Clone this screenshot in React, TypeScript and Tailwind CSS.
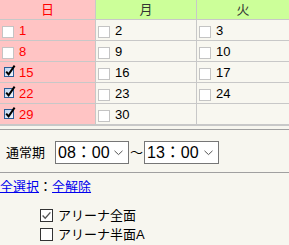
import React from "react";

const FONT = "font-['Liberation_Sans','Noto_Sans_CJK_JP',sans-serif]";

function OldBox({ checked }: { checked: boolean }) {
  if (!checked) {
    return (
      <span className="mt-[1px] inline-block h-[12px] w-[12px] shrink-0 border border-[#c4c4c4] bg-white" />
    );
  }
  return (
    <svg width="14" height="14" viewBox="0 0 14 14" className="ml-[3px] mr-[2px] mt-[1px] shrink-0">
      <defs>
        <linearGradient id="ob" x1="0" y1="0" x2="1" y2="1">
          <stop offset="0" stopColor="#b9d3ef" />
          <stop offset="1" stopColor="#f4f8fd" />
        </linearGradient>
      </defs>
      <rect x="1.5" y="3.5" width="9" height="9" fill="url(#ob)" stroke="#2a5d97" />
      <path d="M3.2 7.6 L5.6 10.4 L11.6 1.6" fill="none" stroke="#000" strokeWidth="2" />
    </svg>
  );
}

function Cell({
  n,
  checked,
  sunday,
}: {
  n?: number;
  checked?: boolean;
  sunday?: boolean;
}) {
  return (
    <div
      className={`flex h-[20px] items-start pt-[1px] ${sunday ? "bg-[#ffc4c4]" : "bg-[#f8f7f0]"}`}
    >
      {n !== undefined && (
        <>
          <span className={checked ? "" : "ml-[2px]"}>
            <OldBox checked={!!checked} />
          </span>
          <span
            className={`${checked ? "ml-0" : "ml-[5px]"} pt-[1px] text-[13px] leading-[17px] ${
              sunday ? "text-[#ff0000]" : "text-black"
            }`}
          >
            {n}
          </span>
        </>
      )}
    </div>
  );
}

function Chevron() {
  return (
    <svg width="9" height="6" viewBox="0 0 9 6" className="shrink-0">
      <path d="M0.5 0.8 L4.5 4.6 L8.5 0.8" fill="none" stroke="#555" strokeWidth="1" />
    </svg>
  );
}

function Sel({ v, w }: { v: string; w: string }) {
  return (
    <div
      className={`flex h-[23px] ${w} items-center justify-between border border-[#767676] bg-white pl-[2px] pr-[5px]`}
    >
      <span className="text-[16px] leading-[20px] text-black">{v}</span>
      <Chevron />
    </div>
  );
}

function ModernBox({ checked }: { checked: boolean }) {
  return (
    <svg width="13" height="13" viewBox="0 0 13 13" className="shrink-0">
      <rect x="0.5" y="0.5" width="12" height="12" fill="#fff" stroke="#333" />
      {checked && (
        <path d="M2.6 6.6 L5.2 9.2 L10.4 3.4" fill="none" stroke="#555" strokeWidth="1.4" />
      )}
    </svg>
  );
}

export default function App() {
  const rows: ({ n?: number; c?: boolean })[][] = [
    [{ n: 1 }, { n: 2 }, { n: 3 }],
    [{ n: 8 }, { n: 9 }, { n: 10 }],
    [{ n: 15, c: true }, { n: 16 }, { n: 17 }],
    [{ n: 22, c: true }, { n: 23 }, { n: 24 }],
    [{ n: 29, c: true }, { n: 30 }, {}],
  ];
  return (
    <div className={`h-[245px] w-[289px] overflow-hidden bg-[#f7f6ef] ${FONT}`}>
      <div className="grid grid-cols-[95px_100px_1fr] gap-px border-b-2 border-[#c8c8c8] bg-[#c8c8c8]">
        <div className="flex h-[19px] items-center justify-center bg-[#ffc4c4] text-[13px] text-[#ff0000]">
          日
        </div>
        <div className="flex h-[19px] items-center justify-center bg-[#ccff99] text-[13px] text-[#333]">
          月
        </div>
        <div className="flex h-[19px] items-center justify-center bg-[#ccff99] text-[13px] text-[#333]">
          火
        </div>
        {rows.map((r, i) => (
          <React.Fragment key={i}>
            <Cell n={r[0].n} checked={r[0].c} sunday />
            <Cell n={r[1].n} checked={r[1].c} />
            <Cell n={r[2].n} checked={r[2].c} />
          </React.Fragment>
        ))}
      </div>
      <div className="mt-[3px] border-t border-[#a0a0a0]" />
      <div className="flex items-center pb-[8px] pt-[11px]">
        <span className="w-[55px] pl-[6px] text-[13px] text-black">通常期</span>
        <Sel v="08：00" w="w-[74px]" />
        <span className="w-[15px] text-center text-[13px] leading-[20px] text-black">～</span>
        <Sel v="13：00" w="w-[75px]" />
      </div>
      <div className="border-t border-[#a0a0a0]" />
      <div className="pt-[5px] text-[13px] leading-[17px]">
        <a className="text-[#0000ee] underline">全選択</a>
        <span className="text-black">：</span>
        <a className="text-[#0000ee] underline">全解除</a>
      </div>
      <div className="mt-[11px] flex flex-col pl-[40px] text-[13px] text-black">
        <label className="flex h-[19px] items-center gap-[5px]">
          <ModernBox checked />
          <span>アリーナ全面</span>
        </label>
        <label className="flex h-[19px] items-center gap-[5px]">
          <ModernBox checked={false} />
          <span>アリーナ半面A</span>
        </label>
      </div>
    </div>
  );
}
